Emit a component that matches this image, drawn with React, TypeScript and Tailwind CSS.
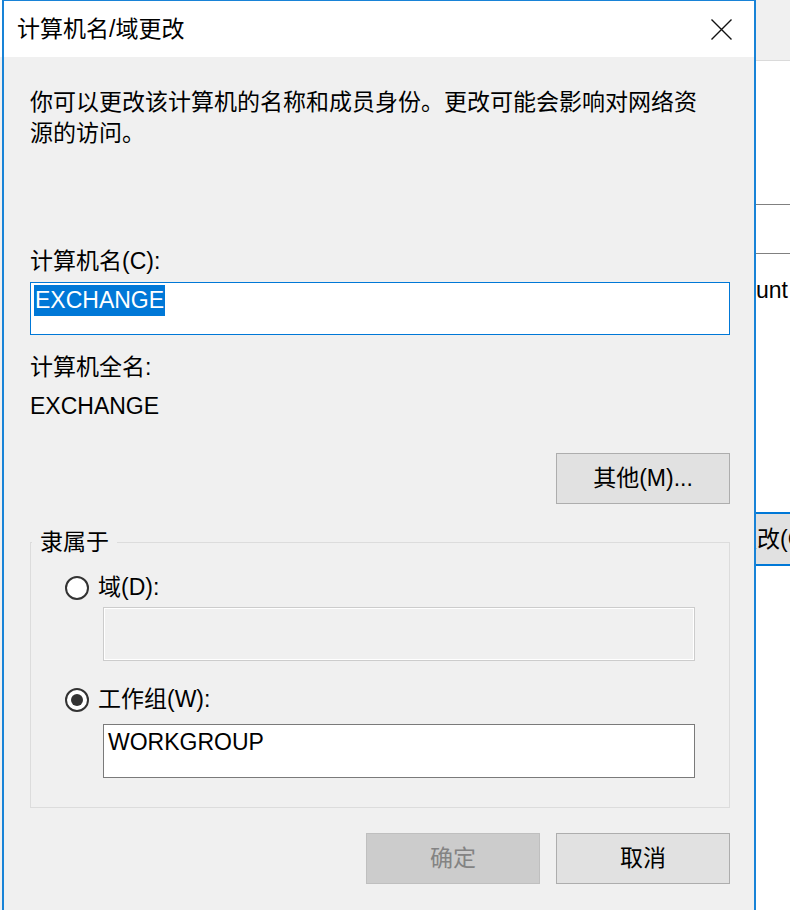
import React from "react";

// 计算机名/域更改 dialog, Windows 10 style, with a sliver of the window behind it
function Radio({ checked }: { checked?: boolean }) {
  return (
    <span className="w-[24px] h-[24px] rounded-full border-2 border-[#333333] bg-white flex items-center justify-center shrink-0">
      {checked && <span className="w-[12px] h-[12px] rounded-full bg-[#333333]" />}
    </span>
  );
}

function Button({ label, disabled }: { label: string; disabled?: boolean }) {
  return (
    <button
      className={
        disabled
          ? "w-[174px] h-[51px] border border-[#bfbfbf] bg-[#cccccc] text-[#838383] flex items-center justify-center"
          : "w-[174px] h-[51px] border border-[#adadad] bg-[#e1e1e1] text-black flex items-center justify-center"
      }
    >
      {label}
    </button>
  );
}

export default function App() {
  return (
    <div className="w-[790px] h-[910px] flex overflow-hidden bg-white text-[23px] leading-[31px] text-black font-[family-name:'Liberation_Sans','Noto_Sans_CJK_SC',sans-serif]">
      {/* left sliver */}
      <div className="w-[2px] flex flex-col shrink-0">
        <div className="h-[57px] bg-white" />
        <div className="flex-1 bg-[#f0f0f0]" />
      </div>

      {/* dialog */}
      <div className="w-[754px] h-[910px] shrink-0 flex flex-col border-l-2 border-r-2 border-t border-[#1883d7] bg-[#f0f0f0]">
        {/* title bar */}
        <div className="h-[56px] bg-white flex items-center justify-between pl-[13px] pr-[22px]">
          <span>计算机名/域更改</span>
          <svg width="21" height="21" viewBox="0 0 21 21">
            <path d="M0.5 0.5 L20.5 20.5 M20.5 0.5 L0.5 20.5" stroke="#111" strokeWidth="1.4" fill="none" />
          </svg>
        </div>

        <div className="flex flex-col pl-[26px] pr-[24px]">
          <p className="mt-[30px]">
            你可以更改该计算机的名称和成员身份。更改可能会影响对网络资
            <br />
            源的访问。
          </p>

          <label className="mt-[97px]">计算机名(C):</label>
          <div className="mt-[5px] h-[53px] border border-[#0078d7] bg-white pl-[3px] pt-[2px]">
            <span className="inline-block px-[1px] bg-[#0078d7] text-white leading-[31px]">EXCHANGE</span>
          </div>

          <div className="mt-[17px]">计算机全名:</div>
          <div className="mt-[8px]">EXCHANGE</div>

          <div className="mt-[31px] flex justify-end">
            <Button label="其他(M)..." />
          </div>

          <fieldset className="mt-[23px] border border-[#dcdcdc] px-[34px] pb-[29px]">
            <legend className="ml-[-33px] px-[8px]">隶属于</legend>
            <div className="mt-[14px] flex items-center gap-[9px]">
              <Radio />
              <span>域(D):</span>
            </div>
            <div className="mt-[4px] ml-[38px] h-[54px] border border-[#cccccc] bg-[#f0f0f0] shadow-[inset_1px_1px_0_#ffffff,inset_-1px_-1px_0_#ffffff]" />
            <div className="mt-[23px] flex items-center gap-[9px]">
              <Radio checked />
              <span>工作组(W):</span>
            </div>
            <div className="mt-[9px] ml-[38px] h-[54px] border border-[#7a7a7a] bg-white pl-[4px] pt-[2px]">
              WORKGROUP
            </div>
          </fieldset>

          <div className="mt-[25px] flex justify-end gap-[16px]">
            <Button label="确定" disabled />
            <Button label="取消" />
          </div>
        </div>
      </div>

      {/* window behind */}
      <div className="flex-1 flex flex-col overflow-hidden bg-white">
        <div className="h-[61px] shrink-0 bg-[#f0f0f0] border-b border-[#dadada]" />
        <div className="h-[144px] shrink-0 border-b border-[#808080]" />
        <div className="h-[49px] shrink-0 border-b border-[#808080]" />
        <div className="mt-[21px] whitespace-nowrap">unt</div>
        <div className="mt-[206px] h-[54px] shrink-0 bg-[#e1e1e1] border-y-2 border-[#0078d7] flex items-center whitespace-nowrap">
          <span className="ml-[-22px]">更改(C)...</span>
        </div>
      </div>
    </div>
  );
}
